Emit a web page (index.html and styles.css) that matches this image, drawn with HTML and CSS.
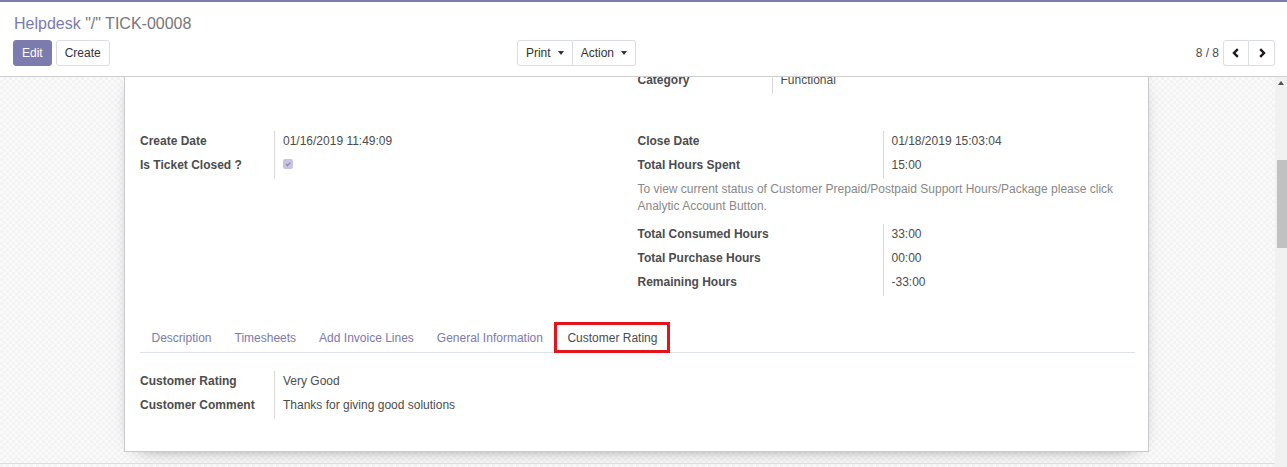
FILE: index.html
```html
<!DOCTYPE html>
<html lang="en">
<head>
<meta charset="utf-8">
<title>Helpdesk TICK-00008</title>
<link rel="stylesheet" href="styles.css">
</head>
<body>
<div class="topbar"></div>
<header class="cp">
  <div class="cp-title"><span class="bc-link">Helpdesk</span> <span class="bc-active">"/" TICK-00008</span></div>
  <div class="cp-bottom">
    <div class="cp-left">
      <div class="cp-buttons">
        <button class="btn btn-primary">Edit</button>
        <button class="btn">Create</button>
      </div>
      <div class="btn-group">
        <button class="btn">Print<span class="caret"></span></button>
        <button class="btn">Action<span class="caret"></span></button>
      </div>
    </div>
    <div class="cp-right">
      <span class="pager-value">8 / 8</span>
      <div class="btn-group">
        <button class="btn pager-btn" aria-label="Previous"><svg width="10" height="10" viewBox="0 0 10 10"><polyline points="6.8,1.2 3,5 6.8,8.8" fill="none" stroke="#1a1a1a" stroke-width="2.4"/></svg></button>
        <button class="btn pager-btn" aria-label="Next"><svg width="10" height="10" viewBox="0 0 10 10"><polyline points="3.2,1.2 7,5 3.2,8.8" fill="none" stroke="#1a1a1a" stroke-width="2.4"/></svg></button>
      </div>
    </div>
  </div>
</header>
<main class="content">
  <div class="sheet-bg">
    <div class="sheet">
      <div class="group-row">
        <div class="col"></div>
        <div class="col">
          <div class="fields">
            <div class="lbl">Category</div><div class="val">Functional</div>
          </div>
        </div>
      </div>
      <div class="group-row second">
        <div class="col">
          <div class="fields">
            <div class="lbl">Create Date</div><div class="val">01/16/2019 11:49:09</div>
            <div class="lbl">Is Ticket Closed ?</div><div class="val"><span class="checkbox"><svg width="10" height="10" viewBox="0 0 10 10"><polyline points="3,5.2 4.4,6.6 7.2,3.6" fill="none" stroke="#8785b5" stroke-width="1.2"/></svg></span></div>
          </div>
        </div>
        <div class="col">
          <div class="fields wide">
            <div class="lbl">Close Date</div><div class="val">01/18/2019 15:03:04</div>
            <div class="lbl">Total Hours Spent</div><div class="val">15:00</div>
          </div>
          <p class="help">To view current status of Customer Prepaid/Postpaid Support Hours/Package please click Analytic Account Button.</p>
          <div class="fields wide">
            <div class="lbl">Total Consumed Hours</div><div class="val">33:00</div>
            <div class="lbl">Total Purchase Hours</div><div class="val">00:00</div>
            <div class="lbl">Remaining Hours</div><div class="val">-33:00</div>
          </div>
        </div>
      </div>
      <nav class="tabs">
        <span class="tab">Description</span>
        <span class="tab">Timesheets</span>
        <span class="tab">Add Invoice Lines</span>
        <span class="tab">General Information</span>
        <span class="tab active">Customer Rating</span>
      </nav>
      <div class="group-row tab-content">
        <div class="col">
          <div class="fields">
            <div class="lbl">Customer Rating</div><div class="val">Very Good</div>
            <div class="lbl">Customer Comment</div><div class="val">Thanks for giving good solutions</div>
          </div>
        </div>
        <div class="col"></div>
      </div>
    </div>
    <div class="chatter-line"></div>
  </div>
  <div class="scrollbar"><div class="sb-arrow"></div><div class="sb-thumb"></div></div>
</main>
</body>
</html>
```
FILE: styles.css
```css
html, body {
  margin: 0;
  padding: 0;
}
body {
  width: 1287px;
  height: 467px;
  overflow: hidden;
  font-family: "Liberation Sans", Arial, sans-serif;
  font-size: 12px;
  color: #4c4c4c;
  background: #ffffff;
}
.topbar {
  height: 2px;
  background: #7c7bad;
}
.cp {
  background: #ffffff;
  padding: 11px 12px 10px 13px;
  border-bottom: 1px solid #cfcfcf;
}
.cp-title {
  height: 22px;
  line-height: 22px;
  font-size: 16px;
  margin-left: 1px;
  white-space: nowrap;
}
.bc-link {
  color: #7c7bad;
}
.bc-active {
  color: #777777;
}
.cp-bottom {
  display: flex;
  margin-top: 5px;
  height: 26px;
}
.cp-left {
  width: 623px;
  display: flex;
  justify-content: space-between;
}
.cp-buttons {
  display: flex;
  gap: 4px;
}
.cp-right {
  flex: 1;
  display: flex;
  justify-content: flex-end;
  align-items: center;
}
.btn {
  box-sizing: border-box;
  height: 26px;
  padding: 0 8px;
  margin: 0;
  font-family: "Liberation Sans", Arial, sans-serif;
  font-size: 12px;
  line-height: 24px;
  color: #333333;
  background: #ffffff;
  border: 1px solid #dadde2;
  border-radius: 3px;
  display: inline-flex;
  align-items: center;
  justify-content: center;
}
.btn-primary {
  background: #7c7bad;
  border-color: #7c7bad;
  color: #ffffff;
}
.btn-group {
  display: flex;
}
.btn-group .btn {
  border-radius: 0;
}
.btn-group .btn:first-child {
  border-radius: 3px 0 0 3px;
}
.btn-group .btn:last-child {
  border-radius: 0 3px 3px 0;
  border-left: 0;
}
.caret {
  display: inline-block;
  width: 0;
  height: 0;
  margin-left: 7px;
  border-top: 4px solid #333333;
  border-left: 3.5px solid transparent;
  border-right: 3.5px solid transparent;
}
.pager-value {
  margin-right: 4px;
  color: #4c4c4c;
}
.pager-btn {
  width: 26px;
  padding: 0;
}
.pager-btn svg {
  display: block;
}
.content {
  display: flex;
  height: 390px;
}
.sheet-bg {
  flex: 1;
  overflow: hidden;
  background-color: #f6f6f6;
  background-image: repeating-conic-gradient(#f3f3f3 0 25%, #fafafa 0 50%);
  background-size: 6px 6px;
}
.sheet {
  box-sizing: border-box;
  width: 1025px;
  margin: -8px 0 11px 124px;
  padding: 0 13px 32px 15px;
  background: #ffffff;
  border: 1px solid #c9c9d3;
  box-shadow: 0 5px 20px -15px #000000;
}
.group-row {
  display: grid;
  grid-template-columns: 1fr 1fr;
}
.group-row.second {
  margin-top: 37px;
}
.fields {
  display: grid;
  grid-template-columns: 134px 1fr;
}
.fields.wide {
  grid-template-columns: 245px 1fr;
}
.lbl {
  font-weight: bold;
  line-height: 17px;
  padding: 2px 0 5px;
  white-space: nowrap;
}
.val {
  line-height: 17px;
  padding: 2px 0 5px 8px;
  border-left: 1px solid #d9d9d9;
}
.checkbox {
  display: block;
  width: 10px;
  height: 10px;
  margin-top: 2px;
  border-radius: 2px;
  background: #c6c4de;
}
.checkbox svg {
  display: block;
}
.help {
  margin: 0 0 9px 0;
  padding-top: 2px;
  line-height: 17px;
  color: #888888;
}
.tabs {
  display: flex;
  align-items: flex-start;
  margin-top: 26px;
  border-bottom: 1px solid #dee2e6;
}
.tab {
  box-sizing: border-box;
  height: 30px;
  padding: 3px 11.5px 0;
  line-height: 27px;
  color: #7c7bad;
  white-space: nowrap;
}
.tab.active {
  height: 31px;
  margin-bottom: -1px;
  padding: 1px 10px 0;
  line-height: 24px;
  color: #4c4c4c;
  background: #ffffff;
  border: 3px solid #e3141b;
}
.tab-content {
  margin-top: 18px;
}
.chatter-line {
  border-top: 1px solid #dddddd;
}
.scrollbar {
  width: 12px;
  background: #f1f1f1;
  display: flex;
  flex-direction: column;
}
.sb-arrow {
  width: 0;
  height: 0;
  margin: 4px auto 0;
  border-left: 3px solid transparent;
  border-right: 3px solid transparent;
  border-bottom: 4px solid #505050;
}
.sb-thumb {
  width: 10px;
  height: 88px;
  margin-top: 75px;
  margin-left: 2px;
  background: #c1c1c1;
}
```
